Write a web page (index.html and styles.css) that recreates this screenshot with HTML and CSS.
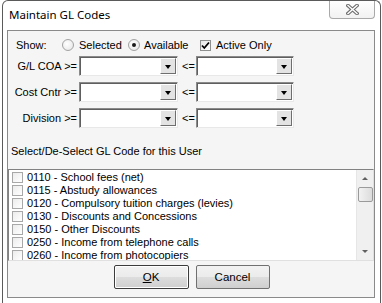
FILE: index.html
```html
<!DOCTYPE html>
<html>
<head>
<meta charset="utf-8">
<link rel="stylesheet" href="styles.css">
</head>
<body>
<div class="window">
  <div class="titlebar">
    <span class="title">Maintain GL Codes</span>
    <div class="close">
      <svg width="13" height="11" viewBox="0 0 13 11">
        <path d="M2 1.5 L11 9.5 M11 1.5 L2 9.5" stroke="#6f6f6f" stroke-width="3.6" stroke-linecap="square" fill="none"/>
        <path d="M2 1.5 L11 9.5 M11 1.5 L2 9.5" stroke="#ffffff" stroke-width="1.4" stroke-linecap="square" fill="none"/>
      </svg>
    </div>
  </div>
  <div class="panel">
    <div class="show-row">
      <span class="show-label">Show:</span>
      <span class="opt opt-sel"><span class="radio"></span>Selected</span>
      <span class="opt opt-avail"><span class="radio on"></span>Available</span>
      <span class="opt opt-active"><span class="check"><svg width="9" height="9" viewBox="0 0 9 9"><path d="M1 4.5 L3.3 7 L8 1.5" stroke="#000" stroke-width="1.8" fill="none"/></svg></span>Active Only</span>
    </div>
    <div class="filters">
      <span class="flabel">G/L COA &gt;=</span>
      <div class="combo"><div class="cbtn"><span class="tri"></span></div></div>
      <span class="le">&lt;=</span>
      <div class="combo"><div class="cbtn"><span class="tri"></span></div></div>

      <span class="flabel">Cost Cntr &gt;=</span>
      <div class="combo"><div class="cbtn"><span class="tri"></span></div></div>
      <span class="le">&lt;=</span>
      <div class="combo"><div class="cbtn"><span class="tri"></span></div></div>

      <span class="flabel">Division &gt;=</span>
      <div class="combo"><div class="cbtn"><span class="tri"></span></div></div>
      <span class="le">&lt;=</span>
      <div class="combo"><div class="cbtn"><span class="tri"></span></div></div>
    </div>
    <div class="caption">Select/De-Select GL Code for this User</div>
    <div class="list">
      <div class="items">
        <div class="item"><span class="box"></span>0110 - School fees (net)</div>
        <div class="item"><span class="box"></span>0115 - Abstudy allowances</div>
        <div class="item"><span class="box"></span>0120 - Compulsory tuition charges (levies)</div>
        <div class="item"><span class="box"></span>0130 - Discounts and Concessions</div>
        <div class="item"><span class="box"></span>0150 - Other Discounts</div>
        <div class="item"><span class="box"></span>0250 - Income from telephone calls</div>
        <div class="item"><span class="box"></span>0260 - Income from photocopiers</div>
      </div>
      <div class="scrollbar">
        <div class="arrow up"></div>
        <div class="thumb"></div>
        <div class="track"></div>
        <div class="arrow down"></div>
      </div>
    </div>
    <div class="buttons">
      <div class="btn default"><span><u>O</u>K</span></div>
      <div class="btn">Cancel</div>
    </div>
  </div>
</div>
</body>
</html>
```

FILE: styles.css
```css
html, body {
  margin: 0;
  padding: 0;
  background: #ffffff;
  overflow: hidden;
}
body {
  width: 382px;
  height: 303px;
  font-family: "Liberation Sans", Arial, sans-serif;
  font-size: 11px;
  color: #000;
}
.window {
  margin-left: 2px;
  width: 377px;
  height: 302px;
  border: 1px solid #5a5a5a;
  border-bottom: none;
  border-radius: 6px 6px 0 0;
  background: #ffffff;
  box-sizing: content-box;
  overflow: hidden;
}
.titlebar {
  height: 29px;
  display: flex;
  align-items: flex-start;
  justify-content: space-between;
}
.title {
  font-family: "Noto Sans", "Open Sans", sans-serif;
  font-size: 11.5px;
  margin-left: 6px;
  margin-top: 6px;
  line-height: 16px;
  color: #000;
}
.close {
  width: 44px;
  height: 18px;
  margin-right: 5px;
  margin-top: -1px;
  border: 1px solid #a9a9a9;
  border-top: none;
  border-radius: 0 0 4px 4px;
  background: linear-gradient(#ffffff, #f2f2f2);
  display: flex;
  align-items: center;
  justify-content: center;
}
.panel {
  margin-left: 4px;
  width: 366px;
  border: 1px solid #8a8a8a;
  background: #f5f5f5;
  padding-bottom: 8px;
}
.show-row {
  display: flex;
  align-items: center;
  height: 16px;
  margin-top: 6px;
  padding-left: 8px;
}
.show-label {
  width: 46px;
}
.opt {
  display: flex;
  align-items: center;
}
.opt-sel { width: 66px; }
.opt-avail { width: 72px; }
.radio {
  width: 10px;
  height: 10px;
  border: 1px solid #a2a2a2;
  border-radius: 50%;
  background: radial-gradient(circle at 40% 40%, #ffffff, #e4e4e4);
  margin-right: 5px;
  position: relative;
  box-sizing: content-box;
}
.opt-avail .radio { margin-right: 4px; }
.radio.on::after {
  content: "";
  position: absolute;
  left: 3px;
  top: 3px;
  width: 4px;
  height: 4px;
  border-radius: 50%;
  background: #1a1a1a;
}
.check {
  width: 11px;
  height: 11px;
  border: 1px solid #8e8f8f;
  background: linear-gradient(135deg, #e6e6e6, #ffffff);
  margin-right: 5px;
  display: flex;
  align-items: center;
  justify-content: center;
  box-sizing: border-box;
}
.filters {
  display: grid;
  grid-template-columns: 71px 99px 18px 98px;
  grid-auto-rows: 20px;
  row-gap: 6px;
  margin-top: 3px;
  align-items: center;
}
.flabel {
  text-align: right;
  padding-right: 2px;
  white-space: nowrap;
}
.le {
  padding-left: 4px;
}
.combo {
  height: 20px;
  box-sizing: border-box;
  border: 1px solid;
  border-color: #8a8a8a #e8e8e8 #e8e8e8 #8a8a8a;
  box-shadow: inset 1px 1px 0 #5f5f5f;
  background: #ffffff;
  display: flex;
  justify-content: flex-end;
  padding: 1px;
}
.cbtn {
  width: 16px;
  box-sizing: border-box;
  border: 1px solid;
  border-color: #ffffff #6e6e6e #6e6e6e #ffffff;
  background: #e3e3e3;
  display: flex;
  align-items: center;
  justify-content: center;
}
.tri {
  width: 0;
  height: 0;
  border-left: 3.5px solid transparent;
  border-right: 3.5px solid transparent;
  border-top: 4px solid #000;
  margin-top: 1px;
}
.caption {
  margin-top: 17px;
  padding-left: 3px;
  line-height: 13px;
}
.list {
  margin-top: 11px;
  height: 92px;
  box-sizing: border-box;
  border: 1px solid;
  border-color: #828282 #e0e0e0 #e0e0e0 #828282;
  background: #ffffff;
  display: flex;
  overflow: hidden;
}
.items {
  flex: 1;
  padding-top: 1px;
  padding-left: 3px;
}
.item {
  height: 13px;
  line-height: 13px;
  display: flex;
  align-items: center;
  white-space: nowrap;
}
.box {
  width: 11px;
  height: 11px;
  box-sizing: border-box;
  border: 1px solid #a8a8a8;
  background: linear-gradient(135deg, #ececec, #ffffff);
  margin-right: 4px;
}
.scrollbar {
  width: 17px;
  background: #f0f0f0;
  border-left: 1px solid #e6e6e6;
  display: flex;
  flex-direction: column;
  align-items: center;
  box-sizing: border-box;
}
.arrow {
  height: 17px;
  width: 100%;
  display: flex;
  align-items: center;
  justify-content: center;
  position: relative;
}
.arrow::after {
  content: "";
  width: 0;
  height: 0;
  border-left: 3px solid transparent;
  border-right: 3px solid transparent;
}
.arrow.up::after { border-bottom: 3px solid #606060; }
.arrow.down::after { border-top: 3px solid #606060; }
.thumb {
  width: 15px;
  height: 15px;
  box-sizing: border-box;
  border: 1px solid #9a9a9a;
  border-radius: 2px;
  background: linear-gradient(90deg, #f2f2f2, #dcdcdc);
}
.track { flex: 1; }
.buttons {
  display: flex;
  justify-content: center;
  gap: 7px;
  margin-top: 4px;
  padding-left: 1px;
}
.btn {
  width: 74px;
  height: 24px;
  box-sizing: border-box;
  border: 1px solid #707070;
  border-radius: 2px;
  background: linear-gradient(#f2f2f2 0%, #ebebeb 50%, #dddddd 51%, #cfcfcf 100%);
  display: flex;
  align-items: center;
  justify-content: center;
  font-size: 11.5px;
}
.btn.default {
  width: 75px;
  border: 1px solid #3c3c3c;
  box-shadow: inset 0 0 0 1px #ffffff;
}
```
